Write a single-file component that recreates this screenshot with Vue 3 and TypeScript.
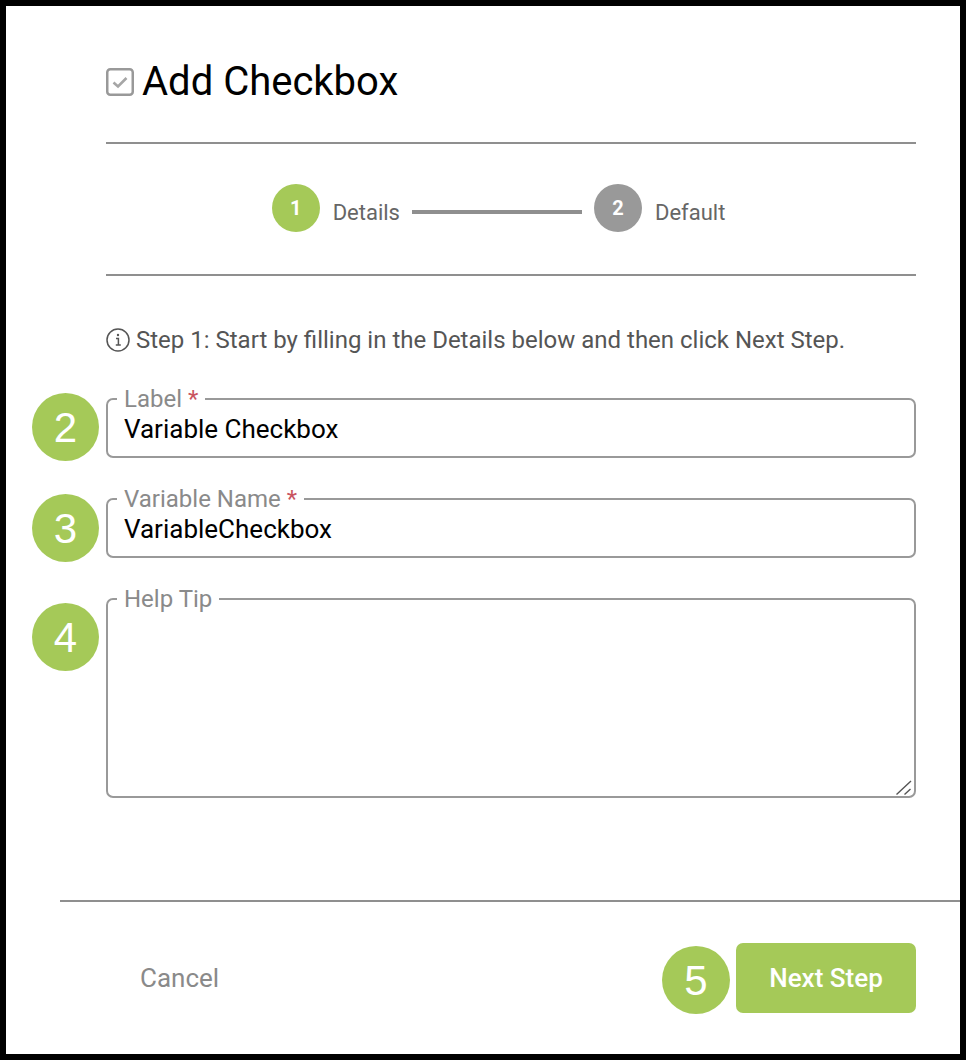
<script setup lang="ts">
interface Step {
  num: number
  label: string
  active: boolean
}

const steps: Step[] = [
  { num: 1, label: 'Details', active: true },
  { num: 2, label: 'Default', active: false },
]
</script>

<template>
  <div class="frame">
    <div class="dialog">
      <header class="title-row">
        <svg class="title-icon" viewBox="0 0 28 28" fill="none">
          <rect x="1.25" y="1.25" width="25.5" height="25.5" rx="3" stroke="#999" stroke-width="2.5" />
          <path d="M7.5 14.5 L12 18.5 L20.5 10" stroke="#a6a6a6" stroke-width="2.6" />
        </svg>
        <h1>Add Checkbox</h1>
      </header>

      <div class="stepper">
        <template v-for="(step, i) in steps" :key="step.num">
          <div v-if="i > 0" class="step-line"></div>
          <div class="step">
            <span class="step-num" :class="{ active: step.active }">{{ step.num }}</span>
            <span class="step-label">{{ step.label }}</span>
          </div>
        </template>
      </div>

      <p class="info">
        <svg class="info-icon" viewBox="0 0 24 24" fill="none">
          <circle cx="12" cy="12" r="11" stroke="#555" stroke-width="1.5" />
          <path d="M10 10.5h2.4v6.5M9.8 17h5" stroke="#555" stroke-width="1.5" />
          <circle cx="12" cy="7" r="1.2" fill="#555" />
        </svg>
        Step 1: Start by filling in the Details below and then click Next Step.
      </p>

      <form class="fields" @submit.prevent>
        <fieldset class="field">
          <legend>Label <span class="req">*</span></legend>
          <input type="text" value="Variable Checkbox" />
          <span class="badge badge-label">2</span>
        </fieldset>
        <fieldset class="field">
          <legend>Variable Name <span class="req">*</span></legend>
          <input type="text" value="VariableCheckbox" />
          <span class="badge badge-name">3</span>
        </fieldset>
        <fieldset class="field field-tall">
          <legend>Help Tip</legend>
          <textarea></textarea>
          <svg class="resizer" viewBox="0 0 16 15" fill="none">
            <path d="M0.5 14.5 L15 1 M8.5 14.5 L14.5 9" stroke="#555" stroke-width="1.4" />
          </svg>
          <span class="badge badge-tip">4</span>
        </fieldset>
      </form>

      <footer class="footer">
        <button class="cancel" type="button">Cancel</button>
        <div class="next-wrap">
          <span class="badge badge-next">5</span>
          <button class="next" type="button">Next Step</button>
        </div>
      </footer>
    </div>
  </div>
</template>

<style>
html,
body {
  margin: 0;
  background: #000;
}
</style>

<style scoped>
.frame {
  width: 966px;
  height: 1060px;
  box-sizing: border-box;
  padding: 6px;
  background: #000;
  font-family: Roboto, "Liberation Sans", sans-serif;
}

.dialog {
  height: 100%;
  box-sizing: border-box;
  padding: 0 44px 0 100px;
  background: #fff;
  display: flex;
  flex-direction: column;
}

.title-row {
  height: 138px;
  box-sizing: border-box;
  padding: 51px 0 0;
  border-bottom: 2px solid #8f8f8f;
  display: flex;
  align-items: flex-start;
  gap: 8px;
}

.title-icon {
  width: 28px;
  height: 28px;
  margin-top: 11px;
}

h1 {
  margin: 0;
  font-size: 40px;
  line-height: 50px;
  font-weight: 400;
  color: #000;
}

.stepper {
  height: 132px;
  box-sizing: border-box;
  border-bottom: 2px solid #8f8f8f;
  display: flex;
  align-items: center;
  justify-content: center;
  gap: 12px;
  padding: 0 25px 2px 0;
}

.step {
  display: flex;
  align-items: center;
  gap: 13px;
}

.step-num {
  width: 48px;
  height: 48px;
  border-radius: 50%;
  background: #999;
  color: #fff;
  font-size: 20px;
  font-weight: 700;
  display: flex;
  align-items: center;
  justify-content: center;
}

.step-num.active {
  background: #a5c958;
}

.step-label {
  font-size: 22px;
  color: #666;
  margin-top: 8px;
}

.step-line {
  width: 170px;
  height: 4px;
  background: #8f8f8f;
  margin-top: 8px;
}

.info {
  margin: 48px 0 0;
  display: flex;
  align-items: center;
  gap: 6px;
  font-size: 24px;
  line-height: 32px;
  color: #555;
}

.info-icon {
  width: 24px;
  height: 24px;
}

.fields {
  margin-top: 31px;
  display: flex;
  flex-direction: column;
  gap: 29px;
}

.field {
  position: relative;
  margin: 0;
  padding: 0;
  height: 71px;
  box-sizing: border-box;
  border: 2px solid #999;
  border-radius: 7px;
  min-width: 0;
}

.field-tall {
  height: 211px;
}

legend {
  margin-left: 9px;
  padding: 0 7px;
  font-size: 24px;
  line-height: 24px;
  color: #8a8a8a;
}

.req {
  color: #c9545f;
}

input {
  display: block;
  width: 100%;
  height: 36px;
  box-sizing: border-box;
  padding: 0 16px;
  border: 0;
  outline: 0;
  background: transparent;
  font: 400 26px Roboto, sans-serif;
  color: #000;
}

textarea {
  display: block;
  width: 100%;
  height: 185px;
  box-sizing: border-box;
  padding: 0 16px;
  border: 0;
  outline: 0;
  background: transparent;
  border-radius: 7px;
  resize: none;
}

.resizer {
  position: absolute;
  right: 2px;
  bottom: 1px;
  width: 16px;
  height: 15px;
}

.badge {
  position: absolute;
  width: 67px;
  height: 68px;
  border-radius: 50%;
  background: #a5c958;
  color: #fff;
  font-family: "Liberation Sans", sans-serif;
  font-size: 42px;
  padding-top: 2px;
  box-sizing: border-box;
  display: flex;
  align-items: center;
  justify-content: center;
}

.badge-label {
  left: -76px;
  top: -18px;
}

.badge-name {
  left: -76px;
  top: -17px;
}

.badge-tip {
  left: -76px;
  top: -8px;
}

.footer {
  margin: auto -44px 0 -46px;
  height: 154px;
  box-sizing: border-box;
  border-top: 2px solid #8f8f8f;
  padding: 41px 44px 0 80px;
  display: flex;
  justify-content: space-between;
  align-items: flex-start;
}

.cancel {
  height: 70px;
  padding: 0;
  border: 0;
  background: none;
  font: 400 26px Roboto, sans-serif;
  color: #8a8a8a;
}

.next-wrap {
  position: relative;
}

.next {
  width: 180px;
  height: 70px;
  border: 0;
  border-radius: 7px;
  background: #a5c958;
  color: #fff;
  font: 500 26px Roboto, sans-serif;
}

.badge-next {
  left: -74px;
  top: 3px;
  width: 68px;
}
</style>
